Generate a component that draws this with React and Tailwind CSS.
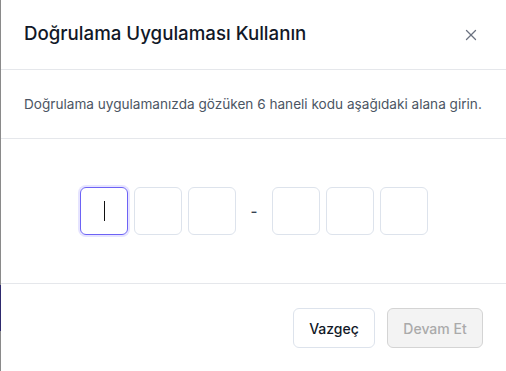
import React from 'react';
import { X } from 'lucide-react';

const font = { fontFamily: 'Inter, "Noto Sans", sans-serif' };

function CodeBox({ active }) {
  return (
    <div
      className={
        active
          ? 'w-12 h-12 rounded-md border border-[#6d63f5] ring-2 ring-[#e6e4ff] flex items-center justify-center'
          : 'w-12 h-12 rounded-md border border-[#dde3ec] bg-white'
      }
    >
      {active && <div className="w-px h-5 bg-[#111]" />}
    </div>
  );
}

export default function App() {
  return (
    <div className="w-[506px] h-[371px] flex bg-white overflow-hidden" style={font}>
      {/* page edge behind the modal */}
      <div className="w-px flex flex-col bg-[#8a8a8a]">
        <div className="h-[285px]" />
        <div className="h-[46px] bg-[#2e2a6e]" />
      </div>

      <div className="flex-1 flex flex-col bg-white rounded-tr-md">
        {/* Header */}
        <div className="h-[70px] flex items-center justify-between pl-[23px] pr-[26px] border-b border-[#e5e7eb]">
          <h2 className="text-[18.7px] font-medium text-[#111827]">Doğrulama Uygulaması Kullanın</h2>
          <X className="w-[18px] h-[18px] text-[#6b7280]" strokeWidth={1.75} />
        </div>

        {/* Description */}
        <div className="h-[69px] flex items-center pl-[23px] border-b border-[#e5e7eb]">
          <p className="text-[13.6px] text-[#4b5563]">
            Doğrulama uygulamanızda gözüken 6 haneli kodu aşağıdaki alana girin.
          </p>
        </div>

        {/* Code inputs */}
        <div className="h-[145px] flex items-center pl-[79px] border-b border-[#e5e7eb]">
          <div className="flex items-center gap-1.5">
            <CodeBox active />
            <CodeBox />
            <CodeBox />
          </div>
          <div className="w-9 flex justify-center pt-0.5 text-[15px] font-medium text-[#374151]">-</div>
          <div className="flex items-center gap-1.5">
            <CodeBox />
            <CodeBox />
            <CodeBox />
          </div>
        </div>

        {/* Footer */}
        <div className="flex justify-end gap-3 pt-6 pr-[23px]">
          <button className="h-10 w-[82px] rounded-md border border-[#dde3ec] bg-white text-[14px] font-medium text-[#111827]">
            Vazgeç
          </button>
          <button className="h-10 w-[96px] rounded-md border border-[#d4d4d4] bg-[#f3f3f3] text-[14px] font-medium text-[#aaaaaa]">
            Devam Et
          </button>
        </div>
      </div>
    </div>
  );
}
